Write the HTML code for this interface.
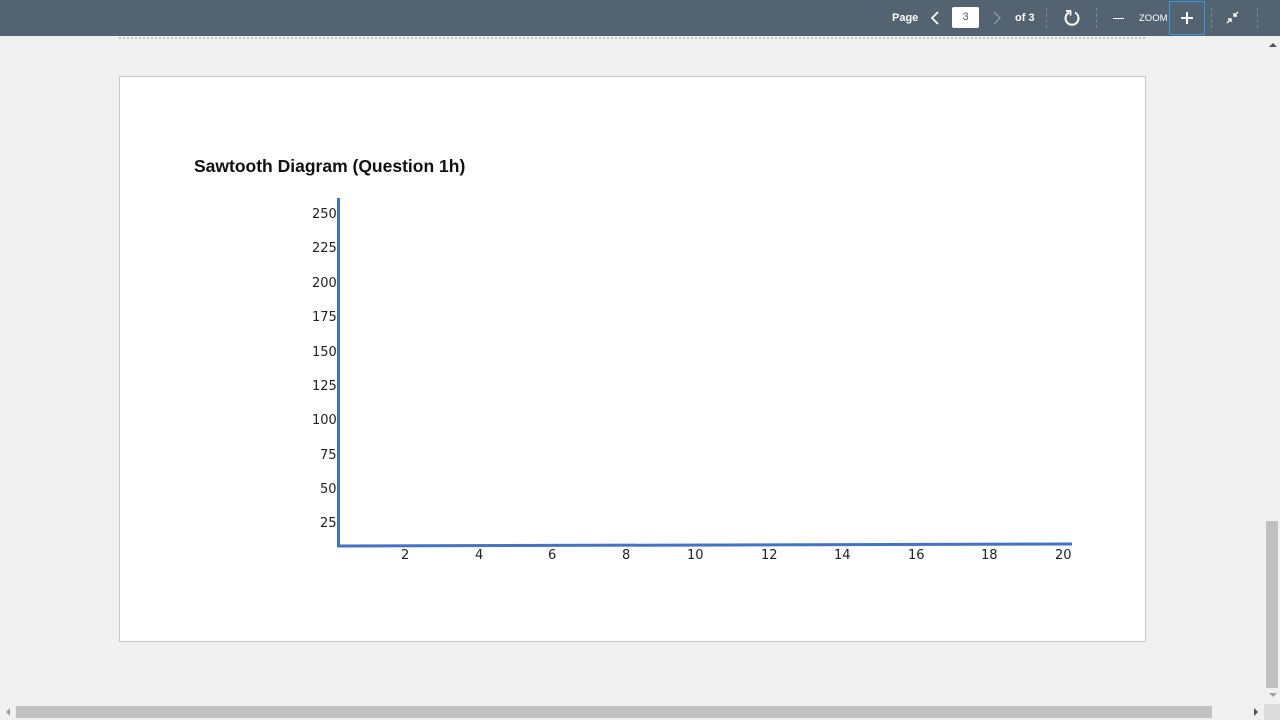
<!DOCTYPE html>
<html><head><meta charset="utf-8"><style>
*{margin:0;padding:0;box-sizing:border-box}
body{width:1280px;height:720px;background:#f1f1f1;position:relative;overflow:hidden;font-family:"DejaVu Sans","Liberation Sans",sans-serif}
.tb{position:absolute;left:0;top:0;width:1280px;height:36px;background:#536371}
.t{position:absolute;color:#fff;font-family:"Liberation Sans",sans-serif;font-size:11px;top:12px}
.sep{position:absolute;top:8px;width:0;height:20px;border-left:1px dashed #7d8b96}
.dots{position:absolute;left:119px;top:37px;width:1026px;height:0;border-top:2px dotted #c6c6c6}
.page{position:absolute;left:119px;top:76px;width:1027px;height:566px;background:#fff;border:1px solid #c8c8c8}
.lbl{position:absolute;font-size:13px;color:#222;font-family:"DejaVu Sans",sans-serif}
</style></head><body>
<div class="tb">
<div class="t" style="left:892px;font-weight:bold">Page</div>
<svg style="position:absolute;left:929px;top:11px" width="12" height="14"><path d="M9 1 L3 7 L9 13" stroke="#fff" stroke-width="1.8" fill="none"/></svg>
<div style="position:absolute;left:952px;top:7px;width:27px;height:21px;background:#fff;border-radius:2px;font-size:11px;color:#555;text-align:center;line-height:21px;font-family:'Liberation Sans',sans-serif">3</div>
<svg style="position:absolute;left:991px;top:11px" width="12" height="14"><path d="M3 1 L9 7 L3 13" stroke="#8796a2" stroke-width="1.5" fill="none"/></svg>
<div class="t" style="left:1015px;font-weight:bold">of 3</div>
<div class="sep" style="left:1046px"></div>
<svg style="position:absolute;left:1063px;top:9px" width="18" height="18"><path d="M6 3.5 A6.5 6.5 0 1 0 12 3.5" stroke="#fff" stroke-width="2" fill="none"/><path d="M3 2 L7.5 2 L7.5 6.5" stroke="#fff" stroke-width="1.8" fill="none"/></svg>
<div class="sep" style="left:1096px"></div>
<div style="position:absolute;left:1113px;top:18px;width:11px;height:1px;background:#fff"></div>
<div class="t" style="left:1139px;font-size:9.5px;top:13px">ZOOM</div>
<div style="position:absolute;left:1169px;top:1px;width:36px;height:34px;border:1px solid #3a9ad9"></div>
<div style="position:absolute;left:1181px;top:17px;width:12px;height:1.5px;background:#fff"></div>
<div style="position:absolute;left:1186.3px;top:12px;width:1.5px;height:12px;background:#fff"></div>
<div class="sep" style="left:1211px"></div>
<svg style="position:absolute;left:1226px;top:11px" width="14" height="14"><path d="M1 12 L5 8 M2 8 L5 8 L5 11 M12 1 L8 5 M8 2 L8 5 L11 5" stroke="#fff" stroke-width="1.4" fill="none"/></svg>
<div class="sep" style="left:1257px"></div>
</div>
<div class="dots"></div>
<div class="page"></div>
<div style="position:absolute;left:194px;top:156px;font-size:17.5px;font-weight:bold;color:#111;font-family:'Liberation Sans',sans-serif;white-space:nowrap">Sawtooth Diagram (Question 1h)</div>
<div style="position:absolute;left:337px;top:198px;width:3px;height:349px;background:#4472c4"></div>
<svg style="position:absolute;left:337px;top:541px" width="740" height="8"><path d="M0 5 L735 3" stroke="#4472c4" stroke-width="3"/></svg>
<div class="lbl" style="left:312px;top:207px">250</div>
<div class="lbl" style="left:312px;top:241px">225</div>
<div class="lbl" style="left:312px;top:276px">200</div>
<div class="lbl" style="left:312px;top:310px">175</div>
<div class="lbl" style="left:312px;top:345px">150</div>
<div class="lbl" style="left:312px;top:379px">125</div>
<div class="lbl" style="left:312px;top:413px">100</div>
<div class="lbl" style="left:320px;top:448px">75</div>
<div class="lbl" style="left:320px;top:482px">50</div>
<div class="lbl" style="left:320px;top:516px">25</div>
<div class="lbl" style="left:401px;top:548px">2</div>
<div class="lbl" style="left:475px;top:548px">4</div>
<div class="lbl" style="left:548px;top:548px">6</div>
<div class="lbl" style="left:622px;top:548px">8</div>
<div class="lbl" style="left:687px;top:548px">10</div>
<div class="lbl" style="left:761px;top:548px">12</div>
<div class="lbl" style="left:834px;top:548px">14</div>
<div class="lbl" style="left:908px;top:548px">16</div>
<div class="lbl" style="left:981px;top:548px">18</div>
<div class="lbl" style="left:1055px;top:548px">20</div>
<svg style="position:absolute;left:1268px;top:41px" width="10" height="8"><path d="M1 6 L5 2 L9 6Z" fill="#505050"/></svg>
<div style="position:absolute;left:1266px;top:521px;width:12px;height:167px;background:#c1c1c1"></div>
<svg style="position:absolute;left:1268px;top:691px" width="10" height="8"><path d="M1 2 L5 6 L9 2Z" fill="#a0a0a0"/></svg>
<div style="position:absolute;left:0;top:704px;width:1264px;height:16px;background:#f1f1f1"></div>
<svg style="position:absolute;left:4px;top:707px" width="8" height="10"><path d="M6 1 L2 5 L6 9Z" fill="#a0a0a0"/></svg>
<div style="position:absolute;left:16px;top:706px;width:1196px;height:12px;background:#c1c1c1"></div>
<svg style="position:absolute;left:1252px;top:707px" width="8" height="10"><path d="M2 1 L6 5 L2 9Z" fill="#505050"/></svg>
<div style="position:absolute;left:1264px;top:704px;width:16px;height:16px;background:#dcdcdc"></div>
</body></html>
